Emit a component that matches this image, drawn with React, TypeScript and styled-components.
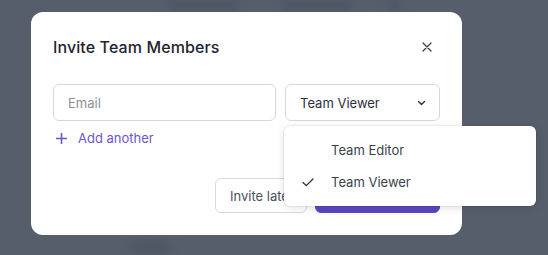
import React, { useState } from "react";
import styled, { createGlobalStyle } from "styled-components";

const GlobalStyle = createGlobalStyle`
  html, body {
    margin: 0;
    padding: 0;
    background: #565e6c;
    font-family: Inter, "Noto Sans", "Liberation Sans", sans-serif;
  }
`;

const Page = styled.div`
  position: relative;
  width: 548px;
  height: 255px;
  overflow: hidden;
  background: #565e6c;
`;

const BlurBar = styled.div<{ $left: number; $top: number; $w: number }>`
  position: absolute;
  left: ${(p) => p.$left}px;
  top: ${(p) => p.$top}px;
  width: ${(p) => p.$w}px;
  height: 10px;
  border-radius: 6px;
  background: #4d5563;
  filter: blur(4px);
`;

const Overlay = styled.div`
  position: absolute;
  inset: 0;
  padding: 12px 0 0 31px;
  box-sizing: border-box;
`;

const Modal = styled.div`
  position: relative;
  width: 431px;
  height: 223px;
  box-sizing: border-box;
  background: #ffffff;
  border-radius: 12px;
  padding: 23px 22px 22px;
  display: flex;
  flex-direction: column;
`;

const Header = styled.div`
  display: flex;
  align-items: center;
  justify-content: space-between;
  height: 24px;
`;

const Title = styled.h2`
  margin: 0;
  font-size: 16px;
  font-weight: 500;
  color: #1f2430;
  letter-spacing: 0.1px;
`;

const CloseButton = styled.button`
  border: none;
  background: none;
  padding: 0;
  margin-right: 8px;
  display: flex;
  cursor: pointer;
  color: #374151;
`;

const FieldRow = styled.div`
  display: flex;
  gap: 9px;
  margin-top: 25px;
`;

const EmailInput = styled.input`
  width: 223px;
  height: 37px;
  box-sizing: border-box;
  border: 1px solid #d3d8e0;
  border-radius: 6px;
  padding: 0 14px;
  font-family: inherit;
  font-size: 13px;
  color: #1f2430;
  outline: none;
  &::placeholder {
    color: #8a8f99;
  }
`;

const SelectWrap = styled.div`
  position: relative;
`;

const SelectButton = styled.button`
  width: 155px;
  height: 37px;
  box-sizing: border-box;
  border: 1px solid #d3d8e0;
  border-radius: 6px;
  background: #fff;
  padding: 0 13px 0 14px;
  display: flex;
  align-items: center;
  justify-content: space-between;
  font-family: inherit;
  font-size: 13px;
  color: #2a2f3a;
  cursor: pointer;
`;

const Menu = styled.ul`
  position: absolute;
  left: -1px;
  top: 42px;
  width: 252px;
  margin: 0;
  padding: 8px 0;
  list-style: none;
  background: #fff;
  border-radius: 6px;
  box-shadow: 0 2px 8px rgba(0, 0, 0, 0.12), 0 0 0 1px rgba(0, 0, 0, 0.05);
  z-index: 5;
`;

const MenuItem = styled.li`
  height: 32px;
  display: flex;
  align-items: center;
  padding-left: 18px;
  font-size: 13px;
  color: #3a3f4a;
  cursor: pointer;
`;

const CheckSlot = styled.span`
  width: 29px;
  display: flex;
  align-items: center;
`;

const AddAnother = styled.button`
  align-self: flex-start;
  margin-top: 9px;
  border: none;
  background: none;
  padding: 0 0 0 3px;
  display: flex;
  align-items: center;
  gap: 11px;
  font-family: inherit;
  font-size: 13px;
  color: #6e55c8;
  cursor: pointer;
`;

const Footer = styled.div`
  margin-top: auto;
  display: flex;
  justify-content: flex-end;
  gap: 8px;
`;

const Button = styled.button<{ $primary?: boolean }>`
  height: 35px;
  box-sizing: border-box;
  border-radius: 6px;
  font-family: inherit;
  font-size: 13px;
  cursor: pointer;
  padding: 0 14px;
  white-space: nowrap;
  overflow: hidden;
  border: 1px solid ${(p) => (p.$primary ? "#5b47c0" : "#d6dae1")};
  background: ${(p) => (p.$primary ? "#5b47c0" : "#fff")};
  color: ${(p) => (p.$primary ? "#fff" : "#4b5060")};
  width: ${(p) => (p.$primary ? "125px" : "92px")};
  text-align: left;
`;

const roles = ["Team Editor", "Team Viewer"];

export default function App() {
  const [role, setRole] = useState("Team Viewer");
  const [open, setOpen] = useState(true);

  return (
    <>
      <GlobalStyle />
      <Page>
        <BlurBar $left={168} $top={0} $w={70} />
        <BlurBar $left={282} $top={0} $w={70} />
        <BlurBar $left={388} $top={0} $w={14} />
        <BlurBar $left={130} $top={242} $w={40} />
        <Overlay>
          <Modal>
            <Header>
              <Title>Invite Team Members</Title>
              <CloseButton aria-label="Close">
                <svg width="10" height="10" viewBox="0 0 10 10">
                  <path d="M1 1L9 9M9 1L1 9" stroke="currentColor" strokeWidth="1.3" strokeLinecap="round" />
                </svg>
              </CloseButton>
            </Header>
            <FieldRow>
              <EmailInput placeholder="Email" />
              <SelectWrap>
                <SelectButton onClick={() => setOpen(!open)}>
                  {role}
                  <svg width="9" height="6" viewBox="0 0 9 6">
                    <path d="M1.5 1.5L4.5 4.5L7.5 1.5" fill="none" stroke="#2a2f3a" strokeWidth="1.4" strokeLinecap="round" strokeLinejoin="round" />
                  </svg>
                </SelectButton>
                {open && (
                  <Menu>
                    {roles.map((r) => (
                      <MenuItem key={r} onClick={() => setRole(r)}>
                        <CheckSlot>
                          {r === role && (
                            <svg width="12" height="9" viewBox="0 0 12 9">
                              <path d="M1 4.5L4.2 7.6L11 1" fill="none" stroke="#2a2f3a" strokeWidth="1.3" strokeLinecap="round" strokeLinejoin="round" />
                            </svg>
                          )}
                        </CheckSlot>
                        {r}
                      </MenuItem>
                    ))}
                  </Menu>
                )}
              </SelectWrap>
            </FieldRow>
            <AddAnother>
              <svg width="11" height="11" viewBox="0 0 11 11">
                <path d="M5.5 0.5V10.5M0.5 5.5H10.5" stroke="#6e55c8" strokeWidth="1.6" strokeLinecap="round" />
              </svg>
              Add another
            </AddAnother>
            <Footer>
              <Button>Invite later</Button>
              <Button $primary aria-label="Send invites" />
            </Footer>
          </Modal>
        </Overlay>
      </Page>
    </>
  );
}
